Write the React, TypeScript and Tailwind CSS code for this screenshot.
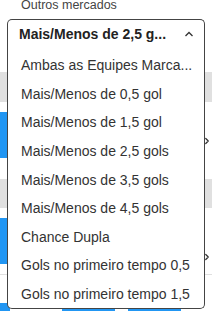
import { ChevronRight } from 'lucide-react'

const markets = [
  { id: 'btts', label: 'Ambas as Equipes Marca...' },
  { id: 'ou05', label: 'Mais/Menos de 0,5 gol' },
  { id: 'ou15', label: 'Mais/Menos de 1,5 gol' },
  { id: 'ou25', label: 'Mais/Menos de 2,5 gols' },
  { id: 'ou35', label: 'Mais/Menos de 3,5 gols' },
  { id: 'ou45', label: 'Mais/Menos de 4,5 gols' },
  { id: 'dc', label: 'Chance Dupla' },
  { id: 'ht05', label: 'Gols no primeiro tempo 0,5' },
  { id: 'ht15', label: 'Gols no primeiro tempo 1,5' }
]

function ChevronUp() {
  return (
    <svg width="10" height="6" viewBox="0 0 10 6" className="shrink-0">
      <polyline points="1.5,5 5,1.5 8.5,5" fill="none" stroke="#333" strokeWidth="1.3" />
    </svg>
  )
}

function EventRow({ arrowOffset }: { arrowOffset: string }) {
  return (
    <div className="flex h-[46px] justify-between">
      <div className="h-full w-[60px] bg-[#2196f3]" />
      <div className={`${arrowOffset} h-[10px] text-[#333]`}>
        <ChevronRight size={10} strokeWidth={3} />
      </div>
    </div>
  )
}

export default function App() {
  const selectedLabel = 'Mais/Menos de 2,5 g...'

  return (
    <div className="relative h-[312px] w-[212px] overflow-hidden bg-white font-['Liberation_Sans',Arial,sans-serif]">
      <p className="pl-[21px] text-[12.5px] leading-[11px] text-[#444]">Outros mercados</p>

      <div className="relative mx-[7px] mt-[8px]">
        <button
          type="button"
          className="flex h-[32px] w-full items-start justify-between rounded-t-[5px] border-x border-t border-[#444] bg-white pl-[11px] pr-[10px] pt-[6px] text-left"
        >
          <span className="whitespace-nowrap text-[14px] font-bold leading-[16px] text-[#222]">{selectedLabel}</span>
          <span className="mt-[5px]">
            <ChevronUp />
          </span>
        </button>

        <ul className="absolute left-0 right-0 top-full z-10 rounded-b-[5px] border-x border-b border-[#444] bg-white">
          {markets.map((m) => (
            <li
              key={m.id}
              className="flex h-[28.6px] items-center whitespace-nowrap pl-[13px] text-[14px] leading-[16px] text-[#333]"
            >
              {m.label}
            </li>
          ))}
        </ul>
      </div>

      {/* page content behind the open list */}
      <div className="mt-[21px]">
        <div className="h-[30px] bg-[#e0e0e0]" />
        <div className="h-[10px]" />
        <EventRow arrowOffset="mt-[24px]" />
        <div className="h-[21px]" />
        <div className="h-[29px] bg-[#e0e0e0]" />
        <div className="h-[10px]" />
        <EventRow arrowOffset="mt-[34px]" />
        <div className="h-[11px] border-b border-[#e0e0e0]" />
        <div className="mt-[28px] flex h-[8px] items-start">
          <div className="h-full w-[10px] bg-[#2196f3]" />
          <div className="ml-[52px] mt-[5px] h-[3px] w-[53px] bg-[#2196f3]" />
          <div className="ml-[13px] mt-[5px] h-[3px] w-[53px] bg-[#2196f3]" />
        </div>
      </div>
    </div>
  )
}
